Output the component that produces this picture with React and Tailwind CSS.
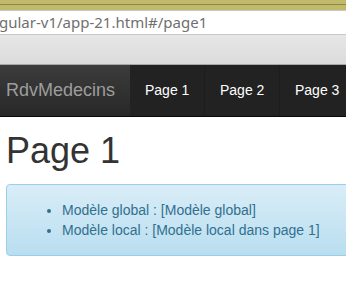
export default function App() {
  return (
    <div className="w-[346px] h-[285px] overflow-hidden bg-white" style={{ fontFamily: "Arial, 'Liberation Sans', sans-serif" }}>
      {/* browser chrome */}
      <div className="h-[5px] bg-[#c2ba6b] border-b border-[#8f874a]" />
      <div className="h-[5px] bg-[#c2ba6b]" />
      <div className="h-[25px] bg-white border-t border-[#b8b8b8] border-b border-[#c8c8c8] flex items-center overflow-hidden">
        <span className="whitespace-nowrap text-[15px] text-[#6f6f6f] -ml-[1px]" style={{ fontFamily: "'Noto Sans', 'Open Sans', sans-serif" }}>
          gular-v1/app-21.html#/page1
        </span>
      </div>
      <div className="h-[30px] bg-gradient-to-b from-[#e6e6e6] to-[#dcdcdc] border-b border-[#a8a8a8]" />

      {/* navbar */}
      <nav className="flex h-[52px] bg-[#222] border-b border-[#080808]">
        <div className="w-[130px] shrink-0 pl-[6px] flex items-center whitespace-nowrap bg-gradient-to-b from-[#3c3c3c] to-[#282828] text-[18px] text-[#9d9d9d]">
          RdvMedecins
        </div>
        <div className="flex">
          <a className="w-[75px] shrink-0 flex items-center pl-[15px] whitespace-nowrap text-[14px] text-white bg-[#222] border-r border-[#1d1d1d]">Page 1</a>
          <a className="w-[75px] shrink-0 flex items-center pl-[15px] whitespace-nowrap text-[14px] text-white bg-[#222] border-r border-[#1d1d1d]">Page 2</a>
          <a className="w-[75px] shrink-0 flex items-center pl-[15px] whitespace-nowrap text-[14px] text-white bg-[#222]">Page 3</a>
        </div>
      </nav>

      {/* content */}
      <div className="pl-[6px]">
        <h1 className="mt-[14px] text-[36px] leading-[1.1] text-[#333] whitespace-nowrap">Page 1</h1>
        <div className="mt-[13px] w-[360px] rounded-[4px] border border-[#9acfea] bg-gradient-to-b from-[#d9edf7] to-[#b9def0] p-[15px] text-[14px] leading-[20px] text-[#31708f]">
          <ul className="list-disc pl-[40px]">
            <li>Modèle global : [Modèle global]</li>
            <li className="whitespace-nowrap">Modèle local : [Modèle local dans page 1]</li>
          </ul>
        </div>
      </div>
    </div>
  );
}
